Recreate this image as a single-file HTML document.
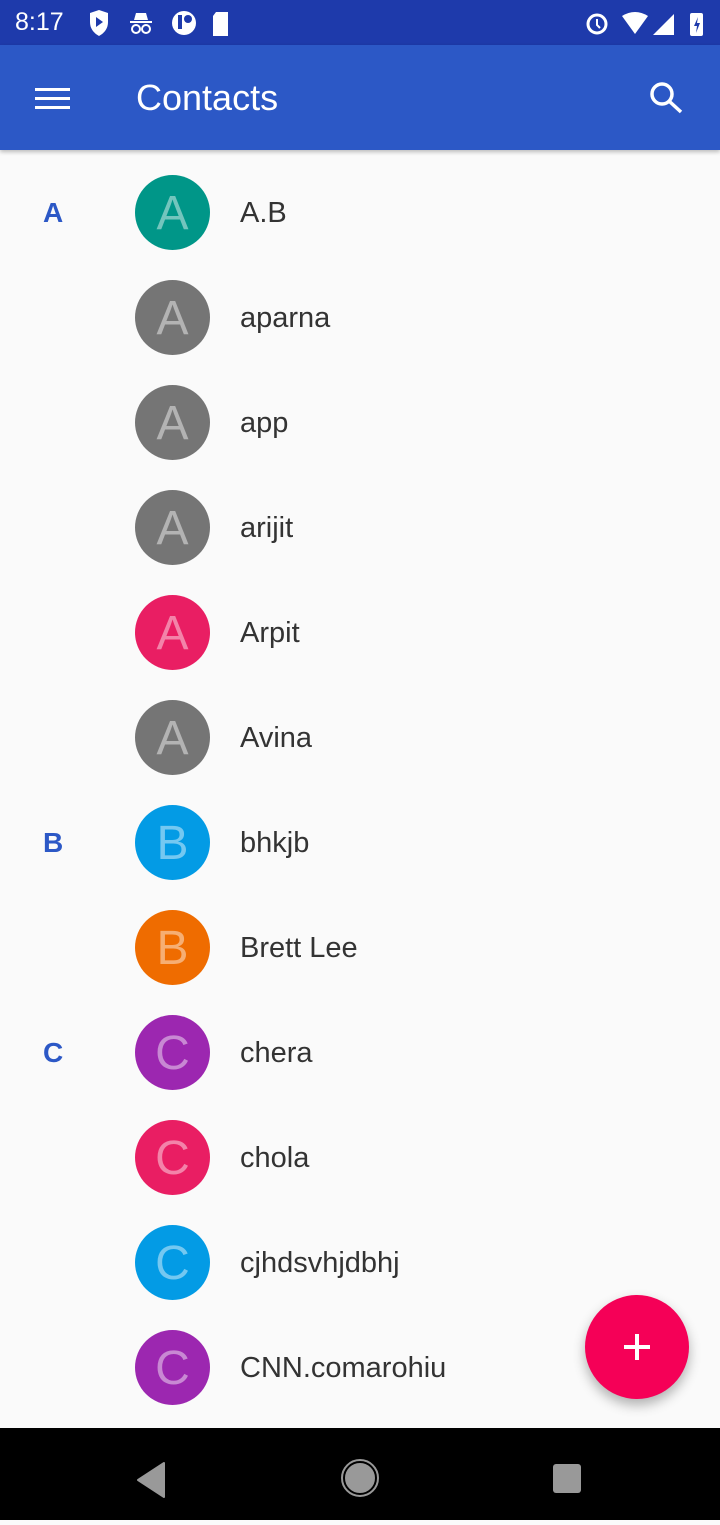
<!DOCTYPE html>
<html><head><meta charset="utf-8"><style>
*{margin:0;padding:0;box-sizing:border-box}
body{width:720px;height:1520px;overflow:hidden;background:#fafafa;font-family:"Liberation Sans",sans-serif;position:relative}
.sb{position:absolute;top:0;left:0;width:720px;height:45px;background:#1e3aab;color:#fff}
.ab{position:absolute;top:45px;left:0;width:720px;height:105px;background:#2c58c6;box-shadow:0 2px 4px rgba(0,0,0,.25)}
.title{position:absolute;left:136px;top:35px;font-size:36px;line-height:36px;color:#fff}
.row{position:absolute;left:0;width:720px;height:105px}
.av{position:absolute;left:135px;top:15px;width:75px;height:75px;border-radius:50%;color:rgba(255,255,255,.45);font-size:48px;text-align:center;line-height:77px}
.nm{position:absolute;left:240px;top:38px;font-size:29px;line-height:30px;color:#333}
.sec{position:absolute;left:43px;top:39px;font-size:28px;line-height:28px;font-weight:bold;color:#2c58c6}
.nav{position:absolute;top:1428px;left:0;width:720px;height:92px;background:#000}
.fab{position:absolute;left:585px;top:1295px;width:104px;height:104px;border-radius:50%;background:#f50057;box-shadow:0 6px 12px rgba(0,0,0,.3)}
</style></head><body>
<div class="sb">
<div style="position:absolute;left:15px;top:10px;font-size:25px;line-height:25px">8:17</div>
<svg style="position:absolute;left:88px;top:9px" width="150" height="28" viewBox="0 0 150 28" fill="#fff">
<path d="M2 4 L11 1 L20 4 L20 13 Q20 22 11 27 Q2 22 2 13Z"/><path d="M8 8 L15 13 L8 18Z" fill="#1e3aab"/>
<path d="M48 4 h10 l2 7 h-14z"/><rect x="42" y="12" width="22" height="2"/><circle cx="48" cy="20" r="4" fill="none" stroke="#fff" stroke-width="2"/><circle cx="58" cy="20" r="4" fill="none" stroke="#fff" stroke-width="2"/>
<circle cx="96" cy="14" r="12"/><rect x="90" y="6" width="4" height="14" fill="#1e3aab"/><circle cx="100" cy="10" r="4" fill="#1e3aab"/>
<path d="M128 3 h12 v24 h-15 v-20z"/>
</svg>
<svg style="position:absolute;left:582px;top:8px" width="130" height="30" viewBox="0 0 130 30" fill="#fff">
<circle cx="15" cy="16" r="9" fill="none" stroke="#fff" stroke-width="3"/><path d="M15 11 v6 l3 3" stroke="#fff" stroke-width="2" fill="none"/>
<path d="M40 8 Q53 0 66 8 L53 26Z"/>
<path d="M92 6 V27 H71Z"/>
<rect x="108" y="5" width="13" height="23" rx="2"/><path d="M116 9 l-4 9 h3 l-1 7 l4 -10 h-3z" fill="#1e3aab"/>
</svg>
</div>
<div class="ab">
<div style="position:absolute;left:35px;top:43px;width:35px;height:3px;background:#fff"></div>
<div style="position:absolute;left:35px;top:52px;width:35px;height:3px;background:#fff"></div>
<div style="position:absolute;left:35px;top:61px;width:35px;height:3px;background:#fff"></div>
<div class="title">Contacts</div>
<svg style="position:absolute;left:648px;top:35px" width="40" height="40" viewBox="0 0 40 40"><circle cx="14" cy="14" r="10" fill="none" stroke="#fff" stroke-width="3.5"/><path d="M21 21 L33 32" stroke="#fff" stroke-width="3.5"/></svg>
</div>

<div class="row" style="top:160px"><div class="sec">A</div><div class="av" style="background:#009688">A</div><div class="nm">A.B</div></div>
<div class="row" style="top:265px"><div class="av" style="background:#757575">A</div><div class="nm">aparna</div></div>
<div class="row" style="top:370px"><div class="av" style="background:#757575">A</div><div class="nm">app</div></div>
<div class="row" style="top:475px"><div class="av" style="background:#757575">A</div><div class="nm">arijit</div></div>
<div class="row" style="top:580px"><div class="av" style="background:#e91e63">A</div><div class="nm">Arpit</div></div>
<div class="row" style="top:685px"><div class="av" style="background:#757575">A</div><div class="nm">Avina</div></div>
<div class="row" style="top:790px"><div class="sec">B</div><div class="av" style="background:#039be5">B</div><div class="nm">bhkjb</div></div>
<div class="row" style="top:895px"><div class="av" style="background:#ef6c00">B</div><div class="nm">Brett Lee</div></div>
<div class="row" style="top:1000px"><div class="sec">C</div><div class="av" style="background:#9c27b0">C</div><div class="nm">chera</div></div>
<div class="row" style="top:1105px"><div class="av" style="background:#e91e63">C</div><div class="nm">chola</div></div>
<div class="row" style="top:1210px"><div class="av" style="background:#039be5">C</div><div class="nm">cjhdsvhjdbhj</div></div>
<div class="row" style="top:1315px"><div class="av" style="background:#9c27b0">C</div><div class="nm">CNN.comarohiu</div></div>

<div class="fab"><div style="position:absolute;left:39px;top:50px;width:26px;height:4px;background:#fff"></div><div style="position:absolute;left:50px;top:39px;width:4px;height:26px;background:#fff"></div></div>

<div class="nav">
<svg width="720" height="92"><path d="M164 35 V69 L138 52Z" fill="#999" stroke="#999" stroke-linejoin="round" stroke-width="2"/><circle cx="360" cy="50" r="16" fill="#999" stroke="#000" stroke-width="2"/><circle cx="360" cy="50" r="18" fill="none" stroke="#999" stroke-width="2"/><rect x="553" y="36" width="28" height="29" rx="3" fill="#999"/></svg>
</div>
</body></html>
